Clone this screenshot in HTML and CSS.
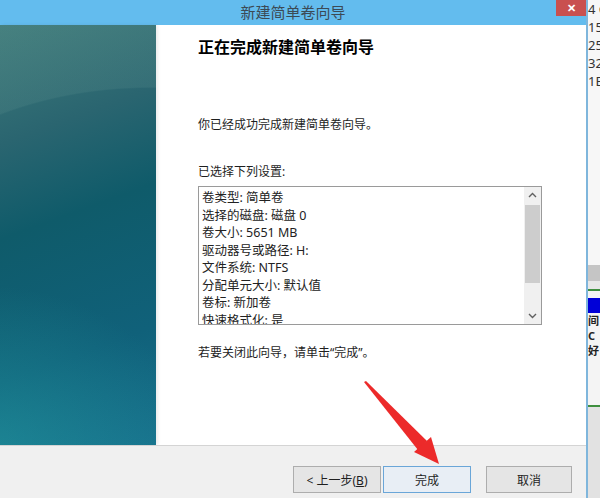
FILE: index.html
```html
<!DOCTYPE html>
<html lang="zh-CN">
<head>
  <meta charset="UTF-8" />
  <title>新建简单卷向导</title>
  <link rel="stylesheet" href="styles.css">
</head>
<body>

<div class="dialog">
  <div class="titlebar">
    <span></span>
    <span class="title">新建简单卷向导</span>
    <span class="close">✕</span>
  </div>

  <div class="main">
    <div class="side"></div>

    <div class="content">
      <h1>正在完成新建简单卷向导</h1>
      <p class="done">你已经成功完成新建简单卷向导。</p>
      <p class="label">已选择下列设置:</p>

      <div class="listbox">
        <div class="lines">
          <div>卷类型: 简单卷</div>
          <div>选择的磁盘: 磁盘 0</div>
          <div>卷大小: 5651 MB</div>
          <div>驱动器号或路径: H:</div>
          <div>文件系统: NTFS</div>
          <div>分配单元大小: 默认值</div>
          <div>卷标: 新加卷</div>
          <div>快速格式化: 是</div>
        </div>
        <div class="scrollbar">
          <svg class="arrow" width="17" height="17" viewBox="0 0 17 17"><polyline points="5,10 8.5,6.5 12,10" fill="none" stroke="#606060" stroke-width="1.4"/></svg>
          <div class="track"><div class="thumb"></div></div>
          <svg class="arrow" width="17" height="17" viewBox="0 0 17 17"><polyline points="5,7 8.5,10.5 12,7" fill="none" stroke="#606060" stroke-width="1.4"/></svg>
        </div>
      </div>

      <p class="hint">若要关闭此向导，请单击“完成”。</p>
    </div>
  </div>

  <div class="footer">
    <button class="btn">&lt; 上一步(<u>B</u>)</button>
    <button class="btn focus">完成</button>
    <button class="btn cancel">取消</button>
  </div>
</div>

<div class="behind">
  <div class="cols">
    <div>4 G</div>
    <div>15</div>
    <div>25</div>
    <div>32</div>
    <div>1B</div>
  </div>
  <div class="band"></div>
  <div class="disk">
    <div class="bluebar"></div>
    <div class="dtext">间</div>
    <div class="dtext">C</div>
    <div class="dtext">好</div>
  </div>
  <div class="lower"></div>
</div>

<!-- red arrow drawn over the screenshot -->
<svg class="pointer" width="600" height="498" viewBox="0 0 600 498">
  <polygon points="364,382 366,381 427,441 418,450" fill="#ec2a2a"/>
  <polygon points="439,464 414,452 431,437" fill="#ec2a2a"/>
</svg>

</body>
</html>
```

FILE: styles.css
```css
body {
  margin: 0;
  width: 600px;
  height: 498px;
  overflow: hidden;
  display: flex;
  font-family: "Noto Sans", "Noto Sans CJK SC", sans-serif;
  font-size: 12px;
  color: #1e1e1e;
  background: #f2f2f2;
}
.dialog {
  width: 586px;
  height: 498px;
  display: flex;
  flex-direction: column;
  border-right: 2px solid #7fb6dc;
}
.titlebar {
  height: 25px;
  background: #63bcee;
  display: grid;
  grid-template-columns: 1fr auto 1fr;
}
.title {
  font-size: 15px;
  line-height: 25px;
  color: #3c4a55;
}
.close {
  justify-self: end;
  width: 30px;
  height: 16px;
  background: #c9504f;
  color: #fff;
  font-size: 11px;
  line-height: 16px;
  text-align: center;
  font-weight: bold;
}
.main {
  height: 420px;
  display: flex;
  background: #fff;
}
.side {
  width: 156px;
  background:
    radial-gradient(ellipse 300px 200px at 150px 262px, rgba(0,0,0,0) 99.3%, rgba(110,160,155,0.16) 100%),
    radial-gradient(ellipse 220px 170px at -20px 430px, rgba(40,170,170,0.45), rgba(40,170,170,0) 100%),
    linear-gradient(160deg, #3f7b7a 0%, #2a6570 25%, #0f5b6a 45%, #10617a 75%, #17708c 100%);
  box-shadow: 2px 0 3px rgba(0,0,0,0.08);
}
.content {
  flex: 1;
  padding-left: 42px;
}
h1 {
  margin: 11px 0 0;
  font-size: 16px;
  line-height: 22px;
  font-weight: bold;
  color: #000;
}
p {
  margin: 0;
  line-height: 18px;
}
.done {
  margin-top: 58px;
}
.label {
  margin-top: 29px;
}
.listbox {
  margin-top: 5px;
  width: 342px;
  height: 137px;
  border: 1px solid #9a9a9a;
  display: flex;
  overflow: hidden;
}
.lines {
  flex: 1;
  padding: 2px 0 0 3px;
  line-height: 17.5px;
  font-size: 12.5px;
  color: #222;
}
.scrollbar {
  width: 17px;
  display: flex;
  flex-direction: column;
  background: #f0f0f0;
}
.arrow {
  display: block;
}
.track {
  flex: 1;
  padding: 1px;
}
.thumb {
  height: 78px;
  background: #cdcdcd;
}
.hint {
  margin-top: 19px;
}
.footer {
  flex: 1;
  background: #f0f0f0;
  border-top: 1px solid #d4d4d4;
  display: flex;
  justify-content: flex-end;
  align-items: flex-start;
  padding: 20px 14px 0 0;
  gap: 2px;
}
.btn {
  width: 88px;
  height: 27px;
  border: 1px solid #adadad;
  background: #e5e5e5;
  font-family: "Noto Sans", "Noto Sans CJK SC", sans-serif;
  font-size: 12px;
  color: #1e1e1e;
  padding: 0;
}
.btn.focus {
  border-color: #6aa6d8;
  background: #e8eef5;
}
.btn.cancel {
  width: 86px;
  margin-left: 13px;
}
.behind {
  flex: 1;
  display: flex;
  flex-direction: column;
  background: #f7f7f7;
  overflow: hidden;
}
.cols {
  height: 265px;
  font-size: 13px;
  line-height: 18px;
  color: #333;
  white-space: nowrap;
}
.band {
  height: 16px;
  background: #c5c5c5;
  border-bottom: 8px solid #e8e8e8;
}
.disk {
  height: 114px;
  border-top: 2px solid #3f8f3f;
  border-bottom: 2px solid #3f8f3f;
  background: #f4f4f4;
}
.bluebar {
  height: 15px;
  margin-top: 7px;
  background: #0000d8;
}
.dtext {
  font-size: 11px;
  line-height: 15px;
  font-weight: bold;
  color: #222;
}
.lower {
  flex: 1;
  background: #e2e2e2;
}
.pointer {
  position: absolute;
  left: 0;
  top: 0;
  pointer-events: none;
}
```
